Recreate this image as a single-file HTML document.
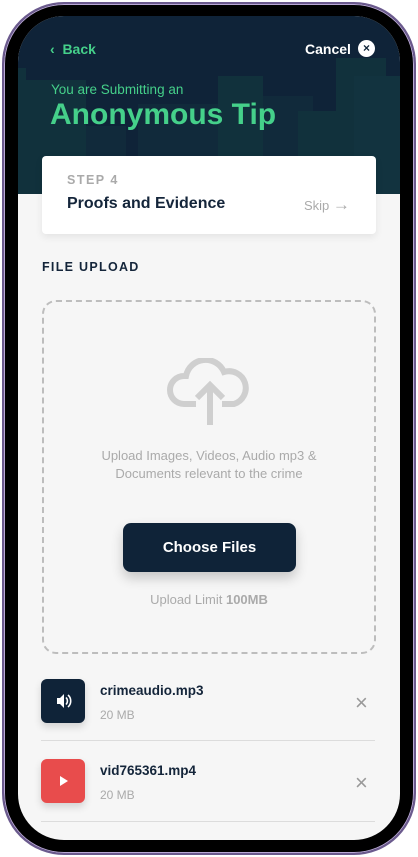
<!DOCTYPE html>
<html><head><meta charset="utf-8"><style>
*{margin:0;padding:0;box-sizing:border-box}
body{width:418px;height:857px;background:#fff;font-family:"Liberation Sans",sans-serif;position:relative;overflow:hidden}
.frame{position:absolute;left:2px;top:2px;width:414px;height:853px;border-radius:62px;background:#000;border:2px solid #6b5a8e;box-shadow:inset 0 0 0 1px #b9a8d6}
.screen{position:absolute;left:18px;top:16px;width:382px;height:824px;border-radius:46px;overflow:hidden;background:#f6f6f6}
.hdr{position:absolute;left:0;top:0;width:382px;height:178px;background:#0f2338;overflow:hidden}
.b{position:absolute;background:#11313c}
.t{position:absolute;color:#45d08a}
.card{position:absolute;left:24px;top:140px;width:334px;height:78px;background:#fff;border-radius:4px;box-shadow:0 3px 8px rgba(0,0,0,.08)}
.dash{position:absolute;left:24px;top:284px;width:334px;height:354px;border:2px dashed #bdbdbd;border-radius:14px}
.btn{position:absolute;left:105px;top:507px;width:173px;height:49px;background:#0f2338;border-radius:8px;color:#fff;font-weight:bold;font-size:15px;text-align:center;line-height:49px;box-shadow:0 6px 12px rgba(0,0,0,.2)}
.ic{position:absolute;left:23px;width:44px;height:44px;border-radius:6px;box-shadow:0 4px 8px rgba(0,0,0,.15)}
.fn{position:absolute;left:82px;font-weight:bold;font-size:13.5px;color:#14253a}
.fs{position:absolute;left:82px;font-size:12px;color:#aaa}
.x{position:absolute;left:337px;font-size:22px;color:#999}
.line{position:absolute;left:23px;width:334px;height:1px;background:#dcdcdc}
</style></head><body>
<div class="frame"></div>
<div class="screen">
 <div class="hdr">
  <div class="b" style="left:0;top:52px;width:8px;height:126px"></div>
  <div class="b" style="left:8px;top:64px;width:60px;height:114px"></div>
  <div class="b" style="left:68px;top:110px;width:40px;height:68px;background:#112a3b"></div>
  <div class="b" style="left:200px;top:60px;width:45px;height:118px"></div>
  <div class="b" style="left:245px;top:80px;width:50px;height:98px;background:#112a3b"></div>
  <div class="b" style="left:280px;top:95px;width:60px;height:83px"></div>
  <div class="b" style="left:318px;top:42px;width:50px;height:136px"></div>
  <div class="b" style="left:336px;top:60px;width:46px;height:118px;background:#12333f"></div>
  <div class="b" style="left:120px;top:88px;width:80px;height:90px;background:#112a3b"></div>
 </div>
 <div class="t" style="left:32px;top:25px;font-size:14px;font-weight:bold">&#8249;&nbsp; Back</div>
 <div style="position:absolute;left:287px;top:25px;color:#fff;font-size:14px;font-weight:bold">Cancel</div>
 <div style="position:absolute;left:340px;top:24px;width:17px;height:17px;border-radius:50%;background:#fff;color:#0f2338;font-size:12px;font-weight:bold;text-align:center;line-height:17px">×</div>
 <div class="t" style="left:33px;top:66px;font-size:13.5px">You are Submitting an</div>
 <div class="t" style="left:32px;top:82px;font-size:30px;font-weight:bold">Anonymous Tip</div>
 <div class="card">
  <div style="position:absolute;left:25px;top:17px;font-size:12.5px;font-weight:bold;color:#aaa;letter-spacing:1.5px">STEP 4</div>
  <div style="position:absolute;left:25px;top:39px;font-size:16px;font-weight:bold;color:#14253a">Proofs and Evidence</div>
  <div style="position:absolute;left:262px;top:39px;font-size:13px;color:#aaa">Skip <span style="font-size:17px">&#8594;</span></div>
 </div>
 <div style="position:absolute;left:24px;top:244px;font-size:12.5px;font-weight:bold;color:#14253a;letter-spacing:1.3px">FILE UPLOAD</div>
 <div class="dash"></div>
 <svg style="position:absolute;left:148px;top:342px" width="86" height="70" viewBox="0 0 86 70"><path d="M30 46H18a14 14 0 0 1 0-28h2A20 20 0 0 1 58 14a15 15 0 0 1 10 32H56" fill="none" stroke="#cfcfcf" stroke-width="6"/><path d="M44 67V27M31 40l13-13 13 13" fill="none" stroke="#cfcfcf" stroke-width="6"/></svg>
 <div style="position:absolute;left:0;width:382px;top:431px;text-align:center;font-size:13px;line-height:18px;color:#aaa">Upload Images, Videos, Audio mp3 &amp;<br>Documents relevant to the crime</div>
 <div class="btn">Choose Files</div>
 <div style="position:absolute;left:0;width:382px;top:576px;text-align:center;font-size:13px;color:#aaa">Upload Limit <b>100MB</b></div>
 <div class="ic" style="top:663px;background:#0f2338"><svg width="44" height="44" viewBox="0 0 44 44"><path d="M16 19h3l4-4v14l-4-4h-3z" fill="#fff"/><path d="M25 18.5a5 5 0 0 1 0 7M27 16a8 8 0 0 1 0 12" stroke="#fff" stroke-width="1.6" fill="none"/></svg></div>
 <div class="fn" style="top:667px">crimeaudio.mp3</div>
 <div class="fs" style="top:692px">20 MB</div>
 <div class="x" style="top:674px">×</div>
 <div class="line" style="top:724px"></div>
 <div class="ic" style="top:743px;background:#e84c4c"><svg width="44" height="44" viewBox="0 0 44 44"><path d="M19 17l8 5-8 5z" fill="#fff"/></svg></div>
 <div class="fn" style="top:747px">vid765361.mp4</div>
 <div class="fs" style="top:772px">20 MB</div>
 <div class="x" style="top:754px">×</div>
 <div class="line" style="top:805px"></div>
</div>
</body></html>
